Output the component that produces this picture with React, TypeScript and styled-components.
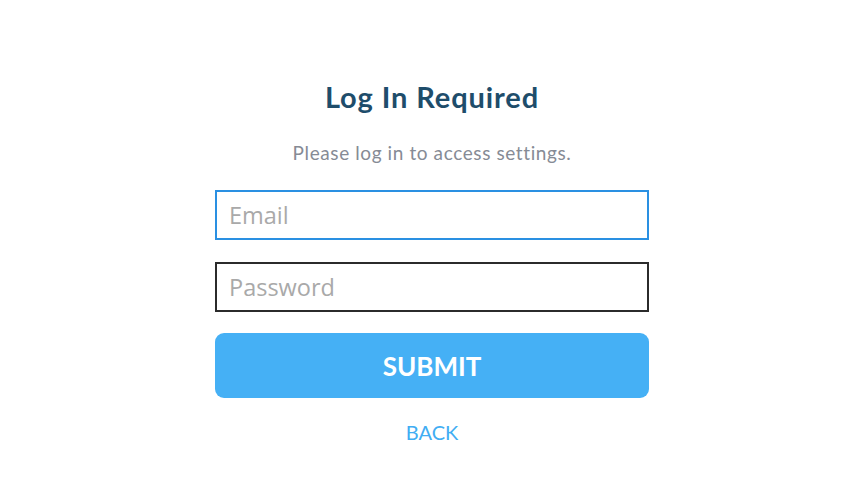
import React from 'react';
import styled, { createGlobalStyle } from 'styled-components';

const GlobalStyle = createGlobalStyle`
  html, body {
    margin: 0;
    padding: 0;
    background: #ffffff;
  }
  body {
    font-family: Lato, 'Open Sans', sans-serif;
  }
`;

const App: React.FC = () => {
  return (
    <Page>
      <GlobalStyle />
      <Form onSubmit={(e) => e.preventDefault()}>
        <Title>Log In Required</Title>
        <Subtitle>Please log in to access settings.</Subtitle>
        <Field type="email" placeholder="Email" focused />
        <Field type="password" placeholder="Password" />
        <SubmitButton type="submit">SUBMIT</SubmitButton>
        <BackLink href="#">BACK</BackLink>
      </Form>
    </Page>
  );
};
export default App;

const Page = styled.div`
  width: 850px;
  height: 488px;
  display: flex;
  justify-content: center;
  padding: 80px 0 0 14px;
  box-sizing: border-box;
`;

const Form = styled.form`
  width: 434px;
  display: flex;
  flex-direction: column;
  align-items: center;
`;

const Title = styled.h1`
  margin: 0;
  font-family: Lato, sans-serif;
  font-weight: 700;
  font-size: 29px;
  line-height: 34px;
  color: #1e4d6b;
  letter-spacing: 0.9px;
`;

const Subtitle = styled.p`
  margin: 27px 0 0;
  font-family: Lato, sans-serif;
  font-size: 19px;
  line-height: 24px;
  color: #868b95;
  letter-spacing: 0.6px;
`;

const Field = styled.input<{ focused?: boolean }>`
  width: 100%;
  height: 50px;
  box-sizing: border-box;
  margin-top: ${(p) => (p.focused ? '25px' : '22px')};
  padding: 0 12px;
  border: 2px solid ${(p) => (p.focused ? '#2a90e2' : '#2b2b2b')};
  border-radius: 0;
  outline: none;
  font-family: 'Open Sans', sans-serif;
  font-size: 23.5px;
  color: #333;
  &::placeholder {
    color: #a9a9a9;
  }
`;

const SubmitButton = styled.button`
  width: 100%;
  height: 65px;
  margin-top: 21px;
  border: none;
  border-radius: 9px;
  background: #45b0f5;
  color: #ffffff;
  font-family: Lato, sans-serif;
  font-weight: 700;
  font-size: 26px;
  cursor: pointer;
`;

const BackLink = styled.a`
  margin-top: 22px;
  font-family: Lato, sans-serif;
  font-size: 20px;
  line-height: 24px;
  color: #41adf3;
  text-decoration: none;
`;
